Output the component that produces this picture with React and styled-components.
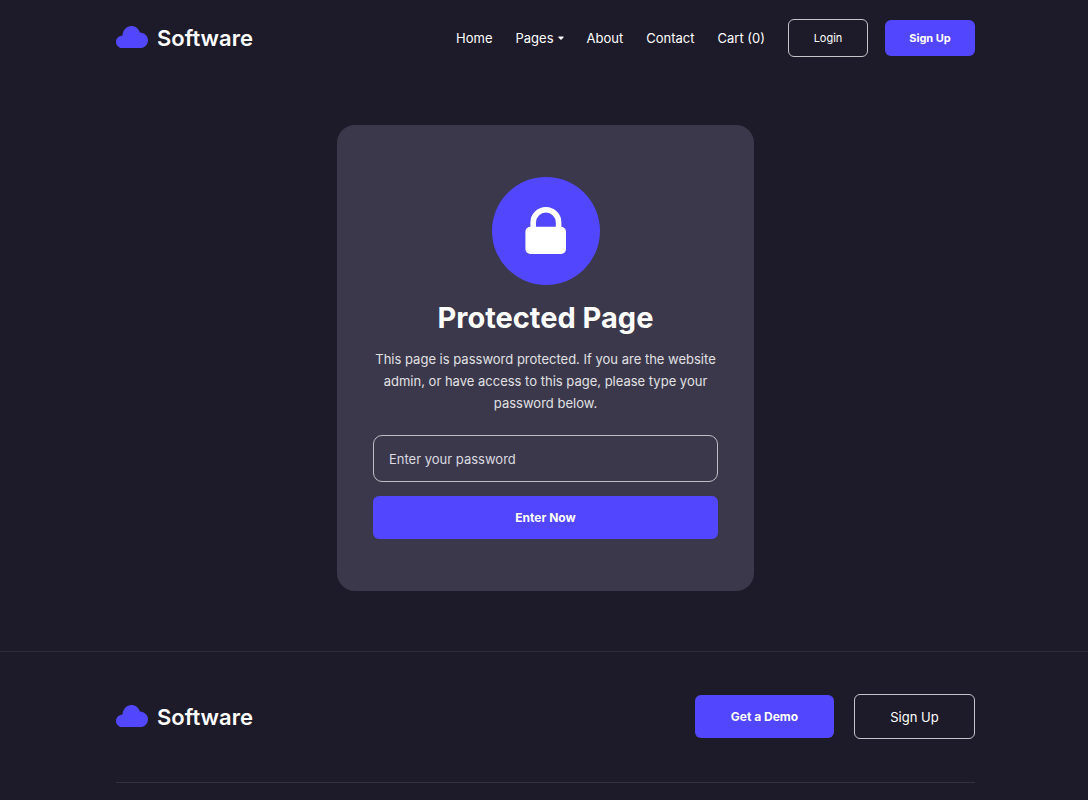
import React from "react";
import styled, { createGlobalStyle, css } from "styled-components";

const GlobalStyle = createGlobalStyle`
  * { box-sizing: border-box; }
  body {
    margin: 0;
    background: #1d1b29;
    color: #ffffff;
    font-family: Inter, "Liberation Sans", sans-serif;
    -webkit-font-smoothing: antialiased;
  }
`;

const gutters = css`
  padding-left: 116px;
  padding-right: 113px;
`;

const Header = styled.header`
  ${gutters}
  display: flex;
  align-items: center;
  justify-content: space-between;
  height: 75px;
`;

const BrandLink = styled.a`
  display: flex;
  align-items: center;
  gap: 9px;
  color: #ffffff;
  font-size: 22px;
  font-weight: 600;
  line-height: 28px;
  text-decoration: none;
`;

const CloudMark = styled.svg`
  display: block;
  width: 32px;
  height: 24px;
  fill: #5246ff;
`;

const Nav = styled.nav`
  display: flex;
  align-items: center;
  gap: 23px;
`;

const NavLink = styled.a`
  display: flex;
  align-items: center;
  gap: 4px;
  color: #ffffff;
  font-size: 13px;
  line-height: 20px;
  text-decoration: none;
  white-space: nowrap;
`;

const Caret = styled.svg`
  width: 6px;
  height: 4px;
  fill: currentColor;
`;

const Actions = styled.div`
  display: flex;
  align-items: center;
  gap: ${(p) => p.$gap}px;
`;

const sizes = {
  small: css`
    height: 36px;
    font-size: 11px;
  `,
  large: css`
    height: 43px;
    font-size: 12px;
  `,
};

const Button = styled.button`
  ${(p) => sizes[p.$size]}
  width: ${(p) => p.$width};
  padding: 0;
  border: 0;
  border-radius: 6px;
  background: #5246ff;
  color: #ffffff;
  font-family: inherit;
  font-weight: 700;
  cursor: pointer;
`;

const OutlineButton = styled(Button)`
  height: ${(p) => (p.$size === "small" ? 38 : 45)}px;
  border: 1px solid #c4c4c9;
  background: transparent;
  font-size: ${(p) => (p.$size === "small" ? 11 : 13)}px;
  font-weight: 400;
`;

const Main = styled.main`
  ${gutters}
  display: flex;
  justify-content: center;
  padding-top: 50px;
  padding-bottom: 60px;
`;

const Card = styled.form`
  display: flex;
  flex-direction: column;
  align-items: center;
  width: 100%;
  max-width: 417px;
  padding: 52px 36px;
  border-radius: 18px;
  background: #3b384b;
`;

const Badge = styled.div`
  display: grid;
  place-items: center;
  width: 108px;
  height: 108px;
  border-radius: 50%;
  background: #5246ff;
`;

const Title = styled.h1`
  margin: 13px 0 10px;
  font-size: 29px;
  font-weight: 700;
  line-height: 40px;
`;

const Description = styled.p`
  margin: 0 0 21px;
  color: #e1e1e4;
  font-size: 13px;
  line-height: 22px;
  text-align: center;
`;

const PasswordInput = styled.input`
  width: 100%;
  height: 47px;
  margin-bottom: 14px;
  padding: 0 15px;
  border: 1px solid #bebdc4;
  border-radius: 9px;
  outline: 0;
  background: transparent;
  color: #ffffff;
  font-family: inherit;
  font-size: 13px;

  &::placeholder {
    color: #dcdbe0;
    opacity: 1;
  }
`;

const Footer = styled.footer`
  ${gutters}
  border-top: 1px solid #2d2b39;
`;

const FooterRow = styled.div`
  display: flex;
  align-items: center;
  justify-content: space-between;
  padding: 42px 0 43px;
  border-bottom: 1px solid #33313e;
`;

function Brand() {
  return (
    <BrandLink href="#">
      <CloudMark viewBox="0 1 32 24" aria-hidden="true">
        <path d="M6.3 23C2.8 23 0 20.3 0 16.9c0-3.5 2.8-6.1 6.5-6.4C6.8 5 10.7 1 15.5 1c4 0 7.1 2.5 8.4 6.5 4.7.3 8.1 3.5 8.1 7.7 0 4.4-3.4 7.8-7.8 7.8Z" />
      </CloudMark>
      Software
    </BrandLink>
  );
}

function LockIcon() {
  return (
    <svg width="42" height="48" viewBox="0 0 42 48" aria-hidden="true">
      <path d="M8.2 24V15.5a12.7 12.7 0 0 1 25.4 0V24" fill="none" stroke="#fff" strokeWidth="5.6" />
      <rect x="0.4" y="19.7" width="40.6" height="27.2" rx="5" fill="#fff" />
    </svg>
  );
}

const links = ["Home", "Pages", "About", "Contact", "Cart (0)"];

export default function App() {
  return (
    <>
      <GlobalStyle />
      <Header>
        <Brand />
        <Nav>
          {links.map((label) => (
            <NavLink href="#" key={label}>
              {label}
              {label === "Pages" && (
                <Caret viewBox="0 0 7 5" aria-hidden="true">
                  <path d="M1 .5h5c.8 0 1.1.8.6 1.3L4.2 4.3a1 1 0 0 1-1.4 0L.4 1.8C-.1 1.3.2.5 1 .5Z" />
                </Caret>
              )}
            </NavLink>
          ))}
          <Actions $gap={17}>
            <OutlineButton type="button" $size="small" $width="80px">Login</OutlineButton>
            <Button type="button" $size="small" $width="90px">Sign Up</Button>
          </Actions>
        </Nav>
      </Header>
      <Main>
        <Card onSubmit={(event) => event.preventDefault()}>
          <Badge><LockIcon /></Badge>
          <Title>Protected Page</Title>
          <Description>
            This page is password protected. If you are the website admin, or have access to this page, please type your password below.
          </Description>
          <PasswordInput type="password" aria-label="Password" placeholder="Enter your password" />
          <Button type="submit" $size="large" $width="100%">Enter Now</Button>
        </Card>
      </Main>
      <Footer>
        <FooterRow>
          <Brand />
          <Actions $gap={20}>
            <Button type="button" $size="large" $width="139px">Get a Demo</Button>
            <OutlineButton type="button" $size="large" $width="121px">Sign Up</OutlineButton>
          </Actions>
        </FooterRow>
      </Footer>
    </>
  );
}
